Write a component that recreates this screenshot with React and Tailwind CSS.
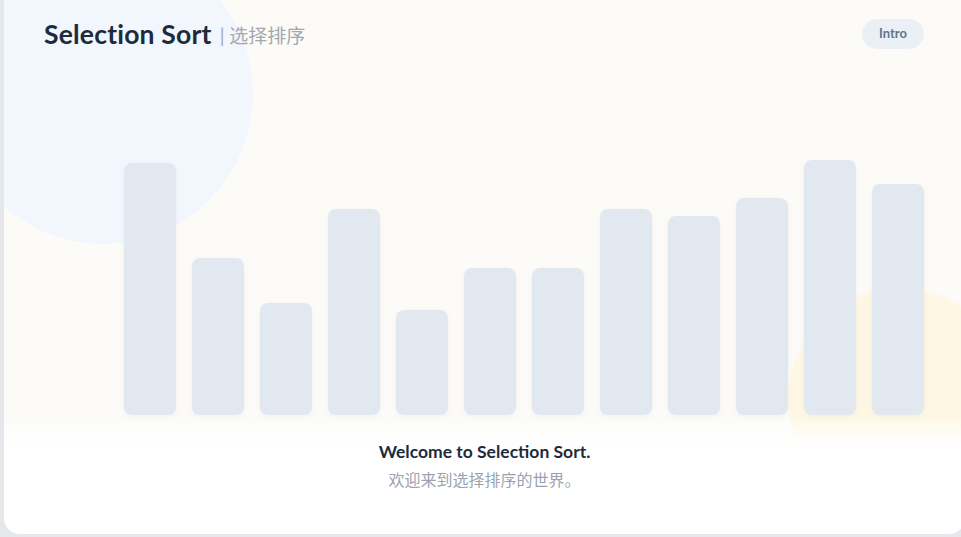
import React from "react";

const bars = [252, 157, 112, 206, 105, 147, 147, 206, 199, 217, 255, 231];

export default function App() {
  return (
    <div className="flex h-[537px] w-[961px] overflow-hidden bg-[#e5e7eb] pl-1" style={{ fontFamily: "Lato, 'Noto Sans CJK SC', sans-serif" }}>
      <div className="relative -mt-4 flex h-[550px] w-[961px] shrink-0 flex-col overflow-hidden rounded-2xl bg-[#fcfbf8]">
        <div className="absolute left-[-51px] top-[-40px] h-[300px] w-[300px] rounded-full bg-[#f1f7fd]" />
        <div className="absolute left-[784px] top-[304px] h-[224px] w-[224px] rounded-full bg-[#fef7e3] blur-[1px]" />

        <div className="relative mt-[35px] flex h-[30px] items-center justify-between pl-10 pr-[41px]">
          <div className="flex items-center leading-none">
            <span className="text-[26.5px] font-bold leading-none tracking-[0.2px] text-[#1e2b3c]">Selection Sort</span>
            <span className="ml-[8px] mt-[2px] text-[19px] leading-none text-[#a3a8b0]">| 选择排序</span>
          </div>
          <button className="h-[30px] w-[62px] rounded-full bg-[#eaf0f6] text-[13px] font-bold text-[#64748b]">Intro</button>
        </div>

        <div className="relative flex h-[366px] shrink-0 items-end justify-end gap-4 pr-[41px]">
          {bars.map((h, i) => (
            <div key={i} className="w-[52px] rounded-lg bg-[#e2e8f0] shadow-[0_2px_6px_rgba(15,23,42,0.04)]" style={{ height: h }} />
          ))}
        </div>

        <div className="relative flex flex-1 flex-col items-center bg-[linear-gradient(to_bottom,rgba(255,255,255,0),#ffffff_30px)] pt-[25px]">
          <div className="text-[17.5px] font-bold leading-[24px] text-[#1e2b3c]">Welcome to Selection Sort.</div>
          <div className="mt-[4px] text-[16px] leading-[24px] text-[#9ca3af]">欢迎来到选择排序的世界。</div>
        </div>
      </div>
    </div>
  );
}
